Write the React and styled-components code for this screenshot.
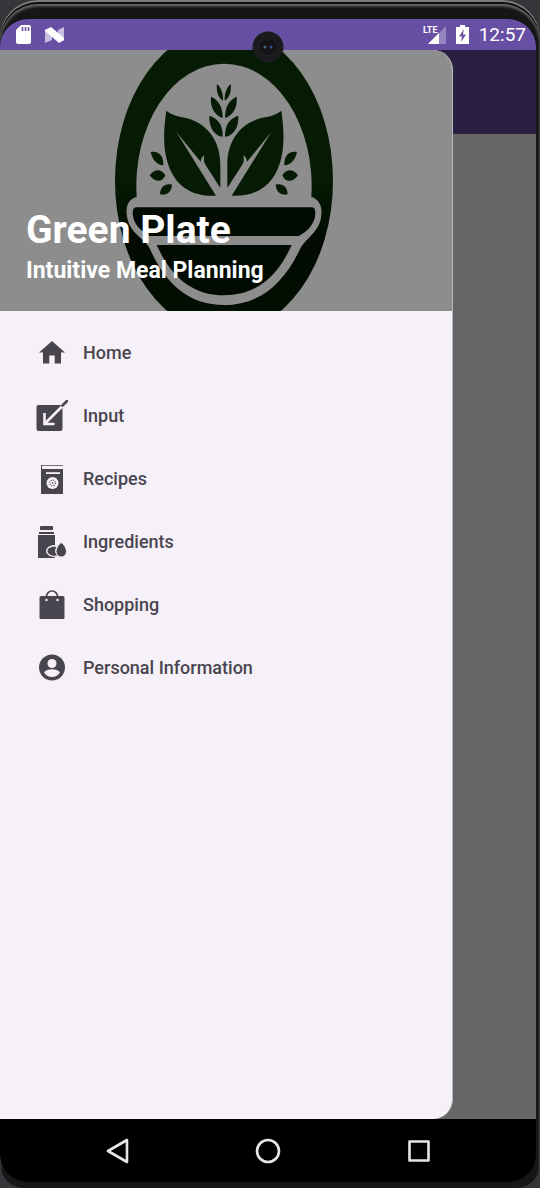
import React from "react";
import styled, { createGlobalStyle } from "styled-components";

const Global = createGlobalStyle`
  * { box-sizing: border-box; }
  body { margin: 0; background: #35363a; font-family: Roboto, "Liberation Sans", sans-serif; }
`;

const Phone = styled.div`
  position: relative;
  display: flex;
  min-height: 100vh;
  padding: 19px 4px 6px 0;
  background: #161616;
  border-radius: 38px 38px 24px 24px;
  box-shadow: inset 0 2px 0 #7d7d7d, inset 0 4px 0 #0c0c0c, inset 0 6px 3px #777;
`;

const Screen = styled.div`
  flex: 1;
  display: flex;
  flex-direction: column;
  min-width: 0;
  overflow: hidden;
  border-radius: 28px;
  background: #000;
`;

const StatusBar = styled.header`
  display: flex;
  align-items: center;
  justify-content: space-between;
  height: 31px;
  padding: 0 10px 0 15px;
  background: #6750a4;
  color: #fff;
`;

const StatusGroup = styled.div`
  display: flex;
  align-items: center;
  gap: ${(p) => p.$gap}px;
`;

const Clock = styled.time`
  font-size: 19px;
  line-height: 24px;
`;

const Camera = styled.svg`
  position: absolute;
  top: 31px;
  left: calc(50% - 18px);
  width: 32px;
  height: 32px;
`;

const Content = styled.div`
  flex: 1;
  display: flex;
  background: linear-gradient(#2b2042 84px, #666 84px);
`;

const Drawer = styled.aside`
  flex: 0 0 auto;
  width: calc(100% - 83px);
  overflow: hidden;
  background: #f6f1f9;
  border-right: 1px solid #b8b6ba;
  border-radius: 0 20px 20px 0;
`;

const Hero = styled.div`
  position: relative;
  display: flex;
  flex-direction: column;
  justify-content: flex-end;
  height: 261px;
  padding: 0 26px 23px;
  background: #8d8d8d;
  color: #fff;
`;

const Emblem = styled.svg`
  position: absolute;
  inset: 0;
  width: 100%;
  height: 100%;
`;

const Title = styled.h1`
  position: relative;
  margin: 0;
  font-size: 39px;
  line-height: 48px;
  font-weight: 700;
`;

const Subtitle = styled.p`
  position: relative;
  margin: 0;
  font-size: 23px;
  line-height: 34px;
  font-weight: 700;
`;

const Menu = styled.nav`
  display: flex;
  flex-direction: column;
  padding: 10px 0;
`;

const MenuLink = styled.a`
  display: flex;
  align-items: center;
  gap: 15px;
  height: 63px;
  padding-left: 36px;
  color: #49454f;
  font-size: 18px;
  line-height: 24px;
  font-weight: 500;
  text-decoration: none;
`;

const MenuIcon = styled.svg`
  width: 32px;
  height: 32px;
  flex: none;
  fill: currentColor;
`;

const NavBar = styled.footer`
  display: flex;
  align-items: center;
  justify-content: space-around;
  height: 63px;
  padding: 0 42px;
`;

const NavButton = styled.button`
  display: grid;
  place-items: center;
  width: 48px;
  height: 48px;
  padding: 0;
  border: 0;
  background: none;
  svg { width: 26px; height: 26px; fill: none; stroke: #e6e6e6; stroke-width: 2.6; stroke-linejoin: round; }
`;

const PAPER = "#8d8d8d";

const HalfPlant = () => (
  <>
    <path d="M351 117C359 124 370 139 369 167C355 160 348 139 351 117Z" />
    <path d="M333 155C350 162 368 178 368 219C346 212 329 188 333 155Z" />
    <path d="M328 212C350 219 369 235 368 275C345 273 326 249 328 212Z" />
    <path d="M199 197C211 207 226 213 247 217C322 230 363 290 361 364V429L315 357C311 350 311 342 313 331C305 335 303 343 302 350L229 261L348 452C264 456 213 412 197 329C189 284 193 239 199 197Z" />
    <path d="M152 321C174 318 191 329 190 361C170 359 158 346 152 321Z" />
    <path d="M149 391C164 371 184 371 196 391C187 413 165 413 149 391Z" />
    <path d="M180 448C181 426 194 414 216 419C215 439 202 452 180 448Z" />
  </>
);

const Logo = () => (
  <Emblem viewBox="-300 15 1356 783" preserveAspectRatio="xMidYMid slice" aria-hidden="true">
    <defs>
      <linearGradient id="leaf" x1="0" y1="0" x2="0" y2="1">
        <stop offset="0.5" stopColor="#051b03" />
        <stop offset="0.7" stopColor="#020a01" />
        <stop offset="1" stopColor="#031002" />
      </linearGradient>
    </defs>
    <ellipse cx="372" cy="407" rx="327" ry="458" fill="url(#leaf)" />
    <path
      fill={PAPER}
      d="M110 455A263 367 0 1 1 634 455C662 465 669 490 662 524C654 560 616 583 602 608C553 715 480 780 372 780C264 780 195 715 147 606C134 583 92 564 83 525C74 490 82 464 110 455Z"
    />
    <g fill="#051b03">
      <HalfPlant />
      <g transform="translate(743 0) scale(-1 1)"><HalfPlant /></g>
    </g>
    <g fill="#020b01">
      <path d="M108 487H637Q646 488 646 505C645 535 625 558 596 573H148C116 555 99 532 98 505Q98 488 108 487Z" />
      <path d="M170 600H575C535 690 472 751 372 751C272 751 210 690 170 600Z" />
    </g>
  </Emblem>
);

const HomeIcon = () => (
  <MenuIcon viewBox="0 0 32 32">
    <path d="M16 4L29 15.6H25V26.5H18.7V18.5H13.3V26.5H7V15.6H3Z" />
  </MenuIcon>
);

const InputIcon = () => (
  <MenuIcon viewBox="0 0 32 32">
    <path d="M2.500 5H24.500Q26.500 5 26.500 7V29Q26.500 31 24.500 31H2.500Q.5 31 .5 29V7Q.5 5 2.500 5Z" />
    <path d="M8.500 13V24H18.500M8.500 24L27.500 5" fill="none" stroke="#f6f1f9" strokeWidth="2.600" />
    <path d="M26.500 5.500L31 1" stroke="currentColor" strokeWidth="2.600" strokeLinecap="round" />
  </MenuIcon>
);

const RecipesIcon = () => (
  <MenuIcon viewBox="0 0 32 32">
    <path d="M5 2H27V2.800H6V6H27V31H5Z" />
    <path d="M10 9.200H24V11H10Z" fill="#f6f1f9" />
    <circle cx="16.500" cy="20" r="6" fill="#f6f1f9" />
    <circle cx="16.500" cy="20" r="2.800" fill="none" stroke="currentColor" strokeWidth="1.200" strokeDasharray="1 1.200" />
    <circle cx="16.500" cy="20" r=".8" />
  </MenuIcon>
);

const IngredientsIcon = () => (
  <MenuIcon viewBox="0 0 32 32">
    <path d="M5 0H16Q17 0 17 1V4H4V1Q4 0 5 0ZM3 6H18V8H3ZM2 9H19V32H2Z" />
    <ellipse cx="18.500" cy="25" rx="8.500" ry="6" fill="#f6f1f9" />
    <path d="M21 29.600C16 30.600 11.500 28 11.500 25C11.500 22 16 20 20.500 21Q17.500 25 21 29.600Z" />
    <path d="M25.300 16.500C22.300 18 20 22.500 20 25.500C20 28.800 22.300 31 25.300 31C28.200 31 30.500 28.800 30.500 25.500C30.500 22.500 28.200 18 25.300 16.500Z" stroke="#f6f1f9" strokeWidth="1" />
  </MenuIcon>
);

const ShoppingIcon = () => (
  <MenuIcon viewBox="0 0 32 32">
    <path d="M5 7H27Q28.500 7 28.500 8.500V28.500Q28.500 30 27 30H5Q3.500 30 3.500 28.500V8.500Q3.500 7 5 7Z" />
    <path d="M10.500 9V7.500A5.500 5.500 0 0 1 21.500 7.500V9" fill="none" stroke="currentColor" strokeWidth="1.700" />
    <circle cx="10.500" cy="11" r="1.200" fill="#f6f1f9" />
    <circle cx="21.500" cy="11" r="1.200" fill="#f6f1f9" />
  </MenuIcon>
);

const PersonIcon = () => (
  <MenuIcon viewBox="0 0 32 32">
    <circle cx="16" cy="15.500" r="13" />
    <circle cx="16" cy="11.500" r="4.500" fill="#f6f1f9" />
    <path d="M8 20.500C9.500 18 13 17.300 16 17.300S22.500 18 24 20.500C22 23.500 19 25 16 25S10 23.500 8 20.500Z" fill="#f6f1f9" />
  </MenuIcon>
);

const ITEMS = [
  ["Home", HomeIcon],
  ["Input", InputIcon],
  ["Recipes", RecipesIcon],
  ["Ingredients", IngredientsIcon],
  ["Shopping", ShoppingIcon],
  ["Personal Information", PersonIcon],
];

export default function App() {
  return (
    <>
      <Global />
      <Phone>
        <Screen>
          <StatusBar>
            <StatusGroup $gap={13}>
              <svg width="17" height="20" viewBox="0 0 17 20" aria-hidden="true">
                <path d="M6 0H14Q16 0 16 2V17Q16 19 14 19H3Q1 19 1 17V5Z" fill="#fff" />
                <path d="M7.500 2V6M10.500 2V6M13.500 2V6" stroke="#6750a4" strokeWidth="1.600" />
              </svg>
              <svg width="20" height="18" viewBox="0 0 20 18" aria-hidden="true">
                <path d="M0 3L7 6V14L0 17ZM13 4L19 1V15L13 10Z" fill="#c9bfe0" />
                <path d="M0 4L6 1L19 12V14L14 17L0 5Z" fill="#fff" />
              </svg>
            </StatusGroup>
            <StatusGroup $gap={10}>
              <svg width="23" height="20" viewBox="0 0 23 20" role="img" aria-label="LTE signal">
                <path d="M23 1V19H5Z" fill="#9484c0" />
                <path d="M16 8V19H5Z" fill="#fff" />
                <text x="0" y="8" fontFamily="'Liberation Sans Narrow', Roboto, sans-serif" fontSize="9" fontWeight="700" fill="#fff">LTE</text>
              </svg>
              <svg width="13" height="20" viewBox="0 0 13 20" role="img" aria-label="Battery charging">
                <path d="M4 0H9V2H13V19H0V2H4Z" fill="#fff" />
                <path d="M8 4L3 11.500H6L5 17L10 9.500H7Z" fill="#6750a4" />
              </svg>
              <Clock>12:57</Clock>
            </StatusGroup>
          </StatusBar>
          <Content>
            <Drawer>
              <Hero>
                <Logo />
                <Title>Green Plate</Title>
                <Subtitle>Intuitive Meal Planning</Subtitle>
              </Hero>
              <Menu>
                {ITEMS.map(([label, Icon]) => (
                  <MenuLink href="#" key={label}>
                    <Icon />
                    {label}
                  </MenuLink>
                ))}
              </Menu>
            </Drawer>
          </Content>
          <NavBar>
            <NavButton aria-label="Back">
              <svg viewBox="0 0 26 26"><path d="M23 2V24L4 13Z" /></svg>
            </NavButton>
            <NavButton aria-label="Home">
              <svg viewBox="0 0 26 26"><circle cx="13" cy="13" r="11" /></svg>
            </NavButton>
            <NavButton aria-label="Recents">
              <svg viewBox="0 0 26 26"><rect x="3.500" y="3.500" width="19" height="19" /></svg>
            </NavButton>
          </NavBar>
        </Screen>
        <Camera viewBox="0 0 32 32" aria-hidden="true">
          <circle cx="16" cy="16" r="15.500" fill="#1b1a1c" />
          <circle cx="16" cy="16" r="8" fill="#131417" />
          <circle cx="13" cy="16" r="1.500" fill="#3d6b78" />
          <circle cx="19" cy="16" r="1.500" fill="#3b4a8c" />
        </Camera>
      </Phone>
    </>
  );
}
